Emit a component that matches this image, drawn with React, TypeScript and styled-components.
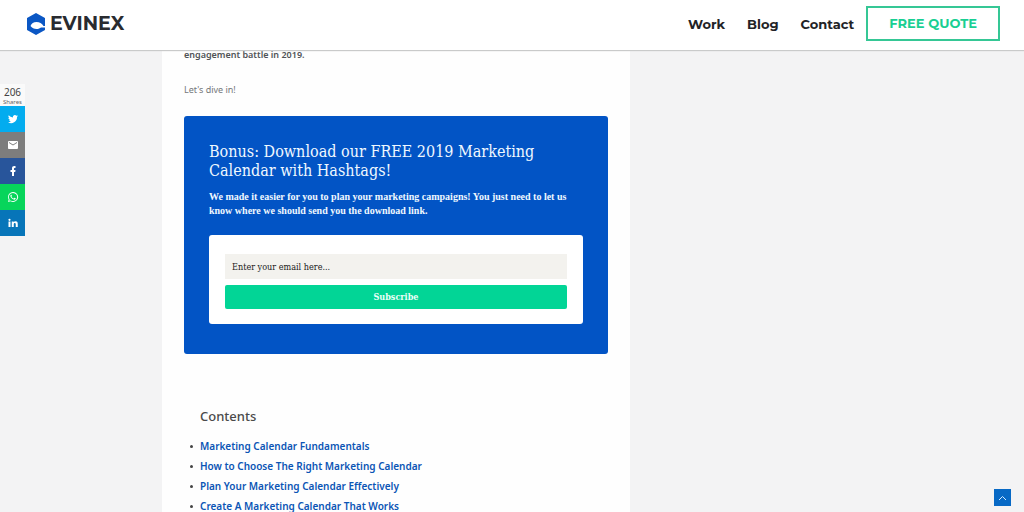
import React from "react";
import styled, { createGlobalStyle } from "styled-components";

const GlobalStyle = createGlobalStyle`
  * { box-sizing: border-box; }
  body {
    margin: 0;
    background: #f3f3f4;
    color: #4a4a4a;
    font-family: "Noto Sans", "Open Sans", sans-serif;
  }
  h2, p, ul { margin: 0; padding: 0; }
  a { text-decoration: none; }
`;

const slab = `"DejaVu Serif Condensed", "DejaVu Serif", serif`;
const wide = `Montserrat, "DejaVu Sans", sans-serif`;

const Page = styled.div`
  display: flex;
  flex-direction: column;
  height: 100vh;
  overflow: hidden;
`;

const Header = styled.header`
  display: flex;
  flex: none;
  align-items: center;
  justify-content: space-between;
  height: 50px;
  padding: 0 24px 3px 27px;
  background: #fff;
  box-shadow: 0 1px 1px #c9caca;
  position: relative;
  z-index: 1;
`;

const Logo = styled.a`
  display: flex;
  line-height: 0;
`;

const Nav = styled.nav`
  display: flex;
  align-items: center;
  font-family: ${wide};
  font-weight: 700;
`;

const NavLink = styled.a`
  margin-right: 22px;
  color: #222326;
  font-size: 13px;
  line-height: 16px;
  &:nth-last-child(2) { margin-right: 12px; }
`;

const QuoteLink = styled.a`
  padding: 8px 21px;
  border: 2px solid #35c795;
  color: #19cf93;
  font-size: 13px;
  line-height: 15px;
`;

const Container = styled.div`
  flex: 1 0 auto;
  display: flex;
  width: 100%;
  max-width: 700px;
  margin: 0 auto;
`;

const Article = styled.main`
  flex: 0 1 468px;
  padding: 0 22px;
  background: #fefefe;
`;

const Paragraph = styled.p<{ $strong?: boolean }>`
  margin-bottom: ${(p) => (p.$strong ? 25 : 21)}px;
  color: ${(p) => (p.$strong ? "#505356" : "#74777a")};
  font-size: 9px;
  font-weight: ${(p) => (p.$strong ? 600 : 400)};
  line-height: 10px;
`;

const Promo = styled.section`
  margin-bottom: 52px;
  padding: 26px 25px 30px;
  border-radius: 3px;
  background: #0254c5;
  color: #eff8ff;
  font-family: ${slab};
`;

const PromoTitle = styled.h2`
  margin-bottom: 10px;
  font-size: 16px;
  font-weight: 400;
  line-height: 19px;
`;

const PromoText = styled.p`
  margin-bottom: 17px;
  font-family: "Liberation Serif", serif;
  font-size: 10px;
  font-weight: 700;
  line-height: 14px;
`;

const SubscribeForm = styled.form`
  display: flex;
  flex-direction: column;
  gap: 6px;
  padding: 19px 16px 15px;
  border-radius: 3px;
  background: #fff;
`;

const EmailInput = styled.input`
  width: 100%;
  height: 25px;
  padding: 0 7px;
  border: 0;
  background: #f3f2ee;
  font-family: ${slab};
  font-size: 9px;
  &::placeholder { color: #202020; opacity: 1; }
`;

const SubscribeButton = styled.button`
  height: 24px;
  padding: 0;
  border: 0;
  border-radius: 2px;
  background: #02d596;
  color: #eafff7;
  font-family: ${slab};
  font-size: 9px;
  font-weight: 700;
`;

const Contents = styled.nav`
  padding-left: 16px;
`;

const ContentsTitle = styled.h2`
  margin-bottom: 10px;
  font-size: 13px;
  font-weight: 500;
  line-height: 20px;
`;

const ContentsList = styled.ul`
  font-size: 10px;
  line-height: 20px;
  list-style: none;
`;

const ContentsItem = styled.li`
  display: flex;
  align-items: center;
  margin-left: -10px;
  &::before {
    content: "";
    width: 3px;
    height: 3px;
    margin-right: 7px;
    border-radius: 50%;
    background: #444;
  }
`;

const ContentsLink = styled.a`
  color: #0b55b5;
  font-weight: 600;
`;

const ShareBar = styled.aside`
  position: fixed;
  top: 84px;
  left: 0;
  width: 25px;
  background: #fafafa;
  text-align: center;
`;

const ShareCount = styled.div`
  padding-top: 2px;
  color: #444;
  font-size: 10px;
  line-height: 12px;
`;

const ShareLabel = styled.div`
  color: #666;
  font-size: 6px;
  line-height: 8px;
`;

const ShareLink = styled.a<{ $color: string }>`
  display: flex;
  align-items: center;
  justify-content: center;
  height: 26px;
  background: ${(p) => p.$color};
`;

const TopButton = styled.button`
  position: fixed;
  right: 13px;
  bottom: 6px;
  display: flex;
  align-items: center;
  justify-content: center;
  width: 17px;
  height: 17px;
  padding: 0;
  border: 0;
  background: #0769c5;
`;

const shares = [
  {
    name: "Twitter",
    color: "#03acef",
    path: "M22 5.9c-.7.3-1.500.6-2.400.7.900-.5 1.500-1.300 1.800-2.300-.8.5-1.700.8-2.600 1A4.100 4.100 0 0 0 11.800 9 11.700 11.700 0 0 1 3.400 4.700a4.100 4.100 0 0 0 1.300 5.500c-.7 0-1.300-.2-1.900-.5 0 2 1.400 3.700 3.300 4.100-.6.2-1.200.2-1.900.1.500 1.600 2 2.800 3.800 2.800A8.300 8.300 0 0 1 2 18.400 11.700 11.700 0 0 0 20 8c.8-.6 1.500-1.300 2-2.100Z",
  },
  {
    name: "Email",
    color: "#7d7d7d",
    path: "M20 4H4a2 2 0 0 0-2 2v12c0 1.100.9 2 2 2h16a2 2 0 0 0 2-2V6a2 2 0 0 0-2-2Zm0 4-8 5-8-5V6l8 5 8-5v2Z",
  },
  {
    name: "Facebook",
    color: "#28559b",
    path: "M17 2v4h-2c-.8 0-1 .4-1 1v3h3l-.5 4H14v8h-4v-8H7v-4h3V6.500C10 3.500 11.800 2 14.500 2H17Z",
  },
  {
    name: "WhatsApp",
    color: "#07d55b",
    path: "M12 2a10 10 0 0 0-8.600 15L2 22l5.200-1.400A10 10 0 1 0 12 2Zm0 1.800a8.200 8.200 0 1 1-4.500 15l-3 .8.800-2.900A8.200 8.200 0 0 1 12 3.800ZM8.500 7.400c-.3 0-.7.1-1 .5-1.500 1.600-.6 3.700.6 5.300 2.100 2.900 4.600 4.300 6.800 4.300 1.500-.1 2.600-1 2.600-2.400 0-.3-.2-.4-.5-.6l-2-.9c-.3-.1-.5-.1-.7.2l-.8 1c-.2.2-.4.200-.7.1-1.900-.8-3-2.100-3.800-3.500-.2-.3 0-.4.1-.6l.7-.9c.1-.2.1-.4 0-.6l-.8-1.600c-.1-.3-.3-.3-.5-.3Z",
  },
  {
    name: "LinkedIn",
    color: "#0775b9",
    path: "M3 9h4v11H3V9Zm2-5.500a2.200 2.200 0 1 1 0 4.400 2.200 2.200 0 0 1 0-4.400ZM9.500 9h3.800v1.600c.6-1.100 1.900-1.900 3.700-1.900 3.900 0 4.500 2.500 4.500 5.700V20h-4v-5.200c0-1.200 0-2.800-1.800-2.800s-2.200 1.400-2.200 2.800V20h-4V9Z",
  },
];

const topics = [
  "Marketing Calendar Fundamentals",
  "How to Choose The Right Marketing Calendar",
  "Plan Your Marketing Calendar Effectively",
  "Create A Marketing Calendar That Works",
];

const LogoWord = styled.span`
  margin-left: 5px;
  color: #292b30;
  font-family: ${wide};
  font-size: 19px;
  font-weight: 700;
  line-height: 22px;
`;

export default function App() {
  return (
    <Page>
      <GlobalStyle />
      <Header>
        <Logo href="#">
          <svg width="18" height="22" viewBox="0 0 18 22" aria-hidden="true">
            <path
              fill="#0b57c4"
              d="M9 0 18 5v8h-1.500C15 10.500 12.500 9 9.500 9S4.500 10.500 3.500 13c1.500 1.800 3.500 3 6 3 2 0 3.500-.7 4.500-1.500h4V17l-9 5-9-5V5Z"
            />
          </svg>
          <LogoWord>EVINEX</LogoWord>
        </Logo>
        <Nav aria-label="Main">
          <NavLink href="#work">Work</NavLink>
          <NavLink href="#blog">Blog</NavLink>
          <NavLink href="#contact">Contact</NavLink>
          <QuoteLink href="#quote">FREE QUOTE</QuoteLink>
        </Nav>
      </Header>
      <Container>
        <Article>
          <Paragraph $strong>engagement battle in 2019.</Paragraph>
          <Paragraph>Let's dive in!</Paragraph>
          <Promo>
            <PromoTitle>Bonus: Download our FREE 2019 Marketing Calendar with Hashtags!</PromoTitle>
            <PromoText>
              We made it easier for you to plan your marketing campaigns! You just need to let us
              know where we should send you the download link.
            </PromoText>
            <SubscribeForm onSubmit={(e) => e.preventDefault()}>
              <EmailInput type="email" aria-label="Email" placeholder="Enter your email here..." />
              <SubscribeButton type="submit">Subscribe</SubscribeButton>
            </SubscribeForm>
          </Promo>
          <Contents aria-label="Contents">
            <ContentsTitle>Contents</ContentsTitle>
            <ContentsList>
              {topics.map((topic) => (
                <ContentsItem key={topic}>
                  <ContentsLink href="#topic">{topic}</ContentsLink>
                </ContentsItem>
              ))}
            </ContentsList>
          </Contents>
        </Article>
      </Container>
      <ShareBar aria-label="Share">
        <ShareCount>206</ShareCount>
        <ShareLabel>Shares</ShareLabel>
        {shares.map((share) => (
          <ShareLink key={share.name} href="#share" aria-label={share.name} $color={share.color}>
            <svg width="12" height="12" viewBox="0 0 24 24" fill="#fff" aria-hidden="true">
              <path d={share.path} />
            </svg>
          </ShareLink>
        ))}
      </ShareBar>
      <TopButton type="button" aria-label="Back to top">
        <svg width="9" height="6" viewBox="0 0 9 6" fill="none" stroke="#d5ebff" aria-hidden="true">
          <path d="M1 5 4.500 1.500 8 5" />
        </svg>
      </TopButton>
    </Page>
  );
}
